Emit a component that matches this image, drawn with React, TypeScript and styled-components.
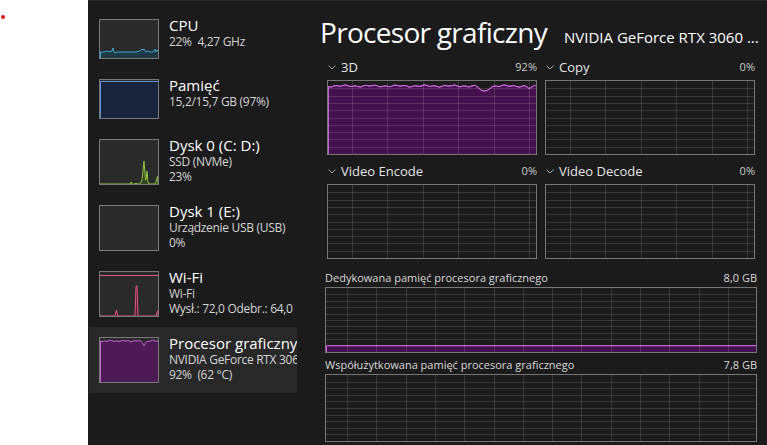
import React from "react";
import styled, { createGlobalStyle } from "styled-components";

const GlobalStyle = createGlobalStyle`
  html, body { margin: 0; padding: 0; background: #ffffff; }
  body { font-family: "Open Sans", "Noto Sans", "DejaVu Sans", sans-serif; }
  #root { width: 767px; height: 445px; }
`;

const Page = styled.div`
  display: flex;
  width: 767px;
  height: 445px;
  overflow: hidden;
`;

const Gutter = styled.div`
  flex: none;
  width: 88px;
  box-sizing: border-box;
  padding: 15px 0 0 1px;
  background: #ffffff;
`;

const RedDot = styled.div`
  width: 4px;
  height: 4px;
  border-radius: 50%;
  background: #e0161b;
`;

const Window = styled.div`
  flex: 1;
  display: flex;
  min-width: 0;
  box-sizing: border-box;
  background: #1b1b1b;
  border-top: 1px solid #2c2c2c;
  color: #ffffff;
`;

const Sidebar = styled.nav`
  flex: none;
  width: 209px;
  box-sizing: border-box;
  padding: 8px 0 0 1px;
  display: flex;
  flex-direction: column;
`;

const Item = styled.div<{ $selected?: boolean }>`
  display: flex;
  align-items: flex-start;
  gap: 10px;
  padding: 10px 0 10px 10px;
  background: ${(p) => (p.$selected ? "#282828" : "transparent")};
  overflow: hidden;
  white-space: nowrap;
`;

const Thumb = styled.div<{ $h: number }>`
  flex: none;
  width: 60px;
  height: ${(p) => p.$h}px;
  box-sizing: border-box;
  border: 1px solid #7a7a7a;
  background: #2a2a2a;
  svg { display: block; width: 100%; height: 100%; }
`;

const ItemText = styled.div`
  display: flex;
  flex-direction: column;
  margin-top: -4px;
  min-width: 0;
`;

const ItemTitle = styled.div`
  font-size: 15px;
  line-height: 20px;
  color: #ffffff;
  margin-bottom: -1px;
`;

const ItemSub = styled.div`
  font-size: 12px;
  line-height: 15px;
  letter-spacing: -0.3px;
  color: #d4d4d4;
`;

const Main = styled.main`
  flex: 1;
  min-width: 0;
  box-sizing: border-box;
  padding: 13px 10px 0 28px;
  display: flex;
  flex-direction: column;
`;

const Header = styled.header`
  display: flex;
  align-items: baseline;
  gap: 17px;
  height: 36px;
  margin-left: -5px;
  margin-right: -6px;
  white-space: nowrap;
`;

const Title = styled.h1`
  margin: 0;
  font-size: 28px;
  line-height: 36px;
  font-weight: 400;
  letter-spacing: -0.7px;
  color: #ffffff;
`;

const Device = styled.div`
  flex: 1;
  min-width: 0;
  font-size: 15px;
  line-height: 36px;
  color: #ffffff;
  overflow: hidden;
`;

const EngineGrid = styled.div`
  display: grid;
  grid-template-columns: 210px 210px;
  column-gap: 8px;
  row-gap: 8px;
  margin: 9px 0 0 2px;
`;

const Engine = styled.section`
  display: flex;
  flex-direction: column;
  gap: 5px;
`;

const EngineHead = styled.div`
  display: flex;
  align-items: center;
  height: 16px;
`;

const EngineName = styled.span`
  flex: 1;
  display: flex;
  align-items: center;
  gap: 5px;
  font-size: 13px;
  line-height: 16px;
  color: #e4e4e4;
  svg { margin-left: 1px; }
`;

const EngineValue = styled.span`
  font-size: 11px;
  line-height: 16px;
  color: #cccccc;
`;

const GraphBox = styled.div<{ $h: number }>`
  height: ${(p) => p.$h}px;
  box-sizing: border-box;
  border: 1px solid #767676;
  svg { display: block; width: 100%; height: 100%; }
`;

const MemSection = styled.section<{ $mt: number }>`
  display: flex;
  flex-direction: column;
  gap: 2px;
  margin-top: ${(p) => p.$mt}px;
`;

const MemHead = styled.div`
  display: flex;
  justify-content: space-between;
  font-size: 11px;
  line-height: 15px;
  color: #d8d8d8;
`;

type Pt = [number, number];

const pts = (a: Pt[]) => a.map(([x, y]) => `${x},${y}`).join(" ");

const series = (w: number, step: number, f: (x: number, i: number) => number): Pt[] => {
  const out: Pt[] = [];
  let i = 0;
  for (let x = 0; x <= w + 0.01; x += step, i++) out.push([x, +f(x, i).toFixed(2)]);
  return out;
};

const Grid: React.FC<{ w: number; h: number; colOffset: number; colStep: number; rows: number }> = ({
  w,
  h,
  colOffset,
  colStep,
  rows,
}) => {
  const lines: React.ReactNode[] = [];
  for (let x = colOffset; x < w; x += colStep)
    lines.push(<line key={"v" + x} x1={x + 0.5} y1={0} x2={x + 0.5} y2={h} />);
  for (let r = 1; r < rows; r++) {
    const y = Math.round((h * r) / rows) + 0.5;
    lines.push(<line key={"h" + r} x1={0} y1={y} x2={w} y2={y} />);
  }
  return (
    <g stroke="rgba(255,255,255,0.13)" strokeWidth={1} shapeRendering="crispEdges">
      {lines}
    </g>
  );
};

const Chevron = () => (
  <svg width="8" height="5" viewBox="0 0 8 5">
    <polyline points="0.5,0.5 4,4 7.5,0.5" fill="none" stroke="#a8a8a8" strokeWidth="1" />
  </svg>
);

const AreaChart: React.FC<{ w: number; h: number; data: Pt[]; fill: string; stroke: string }> = ({
  w,
  h,
  data,
  fill,
  stroke,
}) => {
  const first = data[0];
  const last = data[data.length - 1];
  const poly: Pt[] = [[0.5, h + 2], [0.5, first[1]], ...data.slice(1), [w + 2, last[1]], [w + 2, h + 2]];
  return <polygon points={pts(poly)} fill={fill} stroke={stroke} strokeWidth={1} strokeLinejoin="round" />;
};

/* ---------- data ---------- */

const TOP_W = 208;
const TOP_H = 73;

const gpu3d = series(TOP_W, 3, (x, i) =>
  5 +
  0.7 * Math.sin(i * 1.9) +
  0.5 * Math.sin(i * 0.7 + 1) +
  6 * Math.exp(-(((x - 156) / 5) ** 2)) +
  2.5 * Math.exp(-(((x - 202) / 3) ** 2))
);

const gpuThumb = series(58, 2, (x, i) =>
  3 + 0.6 * Math.sin(i * 2.1) + 0.4 * Math.sin(i * 0.9) + 4 * Math.exp(-(((x - 44) / 2) ** 2))
);

const cpuThumb: Pt[] = [
  [0, 32], [4, 32], [7, 31], [9, 32], [12, 31], [13, 28], [14, 32], [15, 33], [17, 32], [24, 32],
  [30, 32], [36, 32], [40, 31], [42, 29], [43, 30], [44, 29], [46, 32], [48, 31], [50, 32], [53, 32],
  [55, 29], [56, 32], [57, 30], [58, 31],
];

const diskThumb: Pt[] = [
  [0, 44], [30, 44], [31, 42], [32, 44], [35, 44], [36, 43], [37, 44], [40, 44], [42, 40], [44, 21],
  [45.5, 40], [46, 40], [47, 31], [48, 42], [49, 44], [55, 44], [56, 42], [57, 38], [58, 36],
];

const wifiThumb: Pt[] = [
  [0, 44], [15, 44], [16.5, 38], [18, 44], [35, 44], [36, 14], [37, 14], [38, 44], [56, 44],
  [57.5, 39], [58, 39],
];

const MEM_W = 430;

const App: React.FC = () => (
  <>
    <GlobalStyle />
    <Page>
      <Gutter>
        <RedDot />
      </Gutter>
      <Window>
        <Sidebar>
          <Item>
            <Thumb $h={40}>
              <svg viewBox="0 0 58 38" preserveAspectRatio="none">
                <AreaChart w={58} h={38} data={cpuThumb} fill="#1d3a46" stroke="#3aa6cf" />
              </svg>
            </Thumb>
            <ItemText>
              <ItemTitle>CPU</ItemTitle>
              <ItemSub>22%&nbsp; 4,27 GHz</ItemSub>
            </ItemText>
          </Item>
          <Item>
            <Thumb $h={40}>
              <svg viewBox="0 0 58 38" preserveAspectRatio="none">
                <AreaChart w={58} h={38} data={[[0, 1.5], [58, 1.5]]} fill="#19253c" stroke="#5b8fd6" />
              </svg>
            </Thumb>
            <ItemText>
              <ItemTitle>Pamięć</ItemTitle>
              <ItemSub>15,2/15,7 GB (97%)</ItemSub>
            </ItemText>
          </Item>
          <Item>
            <Thumb $h={46}>
              <svg viewBox="0 0 58 44" preserveAspectRatio="none">
                <polygon points={pts([...diskThumb, [58, 46], [0, 46]])} fill="#33421e" stroke="#8cc63f" strokeWidth={1} />
              </svg>
            </Thumb>
            <ItemText>
              <ItemTitle>Dysk 0 (C: D:)</ItemTitle>
              <ItemSub>SSD (NVMe)</ItemSub>
              <ItemSub>23%</ItemSub>
            </ItemText>
          </Item>
          <Item>
            <Thumb $h={46} />
            <ItemText>
              <ItemTitle>Dysk 1 (E:)</ItemTitle>
              <ItemSub>Urządzenie USB (USB)</ItemSub>
              <ItemSub>0%</ItemSub>
            </ItemText>
          </Item>
          <Item>
            <Thumb $h={46}>
              <svg viewBox="0 0 58 44" preserveAspectRatio="none">
                <line x1={0} y1={3.5} x2={58} y2={3.5} stroke="#e2577f" strokeWidth={1} />
                <polygon points={pts([...wifiThumb, [58, 46], [0, 46]])} fill="#4a2232" stroke="#e2577f" strokeWidth={1} />
              </svg>
            </Thumb>
            <ItemText>
              <ItemTitle>Wi-Fi</ItemTitle>
              <ItemSub>Wi-Fi</ItemSub>
              <ItemSub>Wysł.: 72,0 Odebr.: 64,0</ItemSub>
            </ItemText>
          </Item>
          <Item $selected>
            <Thumb $h={46}>
              <svg viewBox="0 0 58 44" preserveAspectRatio="none">
                <AreaChart w={58} h={44} data={gpuThumb} fill="#4c1a54" stroke="#c462d6" />
              </svg>
            </Thumb>
            <ItemText>
              <ItemTitle>Procesor graficzny 0</ItemTitle>
              <ItemSub>NVIDIA GeForce RTX 3060 Laptop GPU</ItemSub>
              <ItemSub>92%&nbsp; (62 °C)</ItemSub>
            </ItemText>
          </Item>
        </Sidebar>

        <Main>
          <Header>
            <Title>Procesor graficzny</Title>
            <Device>NVIDIA GeForce RTX 3060 ...</Device>
          </Header>

          <EngineGrid>
            {[
              { name: "3D", value: "92%", busy: true },
              { name: "Copy", value: "0%" },
              { name: "Video Encode", value: "0%" },
              { name: "Video Decode", value: "0%" },
            ].map((e) => (
              <Engine key={e.name}>
                <EngineHead>
                  <EngineName>
                    <Chevron />
                    {e.name}
                  </EngineName>
                  <EngineValue>{e.value}</EngineValue>
                </EngineHead>
                <GraphBox $h={75}>
                  <svg viewBox={`0 0 ${TOP_W} ${TOP_H}`} preserveAspectRatio="none">
                    {e.busy && <AreaChart w={TOP_W} h={TOP_H} data={gpu3d} fill="#43114b" stroke="#c35fd4" />}
                    <Grid w={TOP_W} h={TOP_H} colOffset={24} colStep={35.4} rows={10} />
                    {e.busy && (
                      <polyline points={pts(gpu3d)} fill="none" stroke="#c96ad9" strokeWidth={1} strokeLinejoin="round" />
                    )}
                  </svg>
                </GraphBox>
              </Engine>
            ))}
          </EngineGrid>

          <MemSection $mt={11}>
            <MemHead>
              <span>Dedykowana pamięć procesora graficznego</span>
              <span>8,0 GB</span>
            </MemHead>
            <GraphBox $h={66}>
              <svg viewBox={`0 0 ${MEM_W} 64`} preserveAspectRatio="none">
                <AreaChart w={MEM_W} h={64} data={[[0, 57.5], [MEM_W, 57.5]]} fill="#43114b" stroke="#c35fd4" />
                <Grid w={MEM_W} h={64} colOffset={21} colStep={29.3} rows={10} />
              </svg>
            </GraphBox>
          </MemSection>

          <MemSection $mt={4}>
            <MemHead>
              <span>Współużytkowana pamięć procesora graficznego</span>
              <span>7,8 GB</span>
            </MemHead>
            <GraphBox $h={68}>
              <svg viewBox={`0 0 ${MEM_W} 66`} preserveAspectRatio="none">
                <Grid w={MEM_W} h={66} colOffset={21} colStep={29.3} rows={10} />
              </svg>
            </GraphBox>
          </MemSection>
        </Main>
      </Window>
    </Page>
  </>
);

export default App;
